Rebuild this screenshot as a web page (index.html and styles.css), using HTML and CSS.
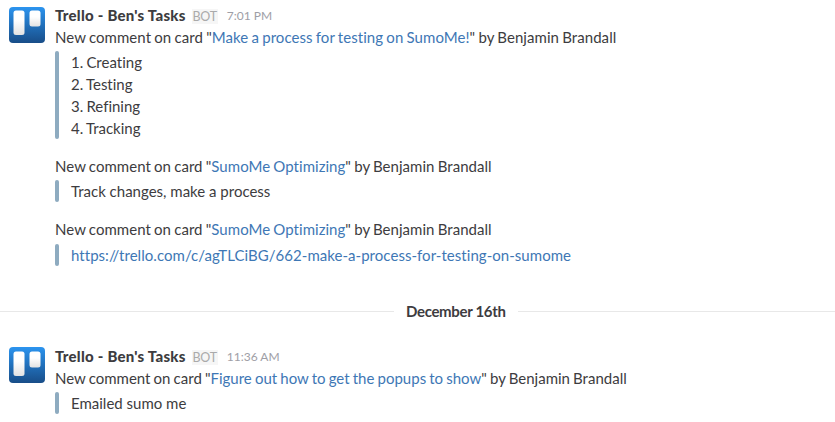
FILE: index.html
```
<!DOCTYPE html>
<html>
<head>
	<meta charset="utf-8">
	<meta name="viewport" content="width=device-width, initial-scale=1">
	<title>Trello - Ben's Tasks</title>
	<link rel="stylesheet" href="styles.css">
</head>
<body>

	<main>
		<div class="message">
			<svg class="avatar" width="36" height="36" viewBox="0 0 36 36">
				<defs>
					<linearGradient id="azul" x1="0" y1="0" x2="0" y2="1">
						<stop offset="0" stop-color="#2b94ef"/>
						<stop offset="1" stop-color="#184d88"/>
					</linearGradient>
					<linearGradient id="blanco" x1="0" y1="0" x2="0" y2="1">
						<stop offset="0.4" stop-color="#fff"/>
						<stop offset="1" stop-color="#e2e2e2"/>
					</linearGradient>
				</defs>
				<rect width="36" height="36" rx="4" fill="url(#azul)"/>
				<rect x="4.5" y="3.5" width="11" height="24.5" rx="2.5" fill="url(#blanco)"/>
				<rect x="20.5" y="3.5" width="11" height="16" rx="2.5" fill="url(#blanco)"/>
			</svg>
			<div class="content">
				<div class="info"><span class="sender">Trello - Ben's Tasks</span><span class="bot">BOT</span><span class="time">7:01 PM</span></div>
				<div class="text first">New comment on card "<a>Make a process for testing on SumoMe!</a>" by Benjamin Brandall</div>
				<div class="quote list"><div>1. Creating<br>2. Testing<br>3. Refining<br>4. Tracking</div></div>
				<div class="text next">New comment on card "<a>SumoMe Optimizing</a>" by Benjamin Brandall</div>
				<div class="quote"><div>Track changes, make a process</div></div>
				<div class="text next">New comment on card "<a>SumoMe Optimizing</a>" by Benjamin Brandall</div>
				<div class="quote url"><a>https://trello.com/c/agTLCiBG/662-make-a-process-for-testing-on-sumome</a></div>
			</div>
		</div>

		<div class="divider"><span>December 16th</span></div>

		<div class="message">
			<svg class="avatar" width="36" height="36" viewBox="0 0 36 36">
				<rect width="36" height="36" rx="4" fill="url(#azul)"/>
				<rect x="4.5" y="4.5" width="11" height="24.5" rx="2.5" fill="url(#blanco)"/>
				<rect x="20.5" y="4.5" width="11" height="16" rx="2.5" fill="url(#blanco)"/>
			</svg>
			<div class="content">
				<div class="info"><span class="sender">Trello - Ben's Tasks</span><span class="bot">BOT</span><span class="time">11:36 AM</span></div>
				<div class="text last">New comment on card "<a>Figure out how to get the popups to show</a>" by Benjamin Brandall</div>
				<div class="quote"><div>Emailed sumo me</div></div>
			</div>
		</div>
	</main>

</body>
</html>
```

FILE: styles.css
```
body{
	margin: 0;
	background: #fff;
	color: #3d3c40;
	font-family: Lato, sans-serif;
	font-size: 15px;
	font-variant-ligatures: none;
	line-height: 22px;
	overflow: hidden;
}
a{
	color: #3e77b5;
}

/*--------Messages-----------*/
.message{
	display: flex;
	gap: 10px;
	padding: 4px 9px 0;
}
.avatar{
	flex-shrink: 0;
	margin-top: 3px;
}
.divider + .message .avatar{
	margin-top: 2px;
}
.content{
	white-space: nowrap;
}
.info{
	display: flex;
	align-items: center;
	height: 22px;
}
.sender{
	font-weight: 900;
	letter-spacing: 0.25px;
}
.text{
	letter-spacing: 0.04px;
	word-spacing: -0.7px;
}
.first{
	letter-spacing: 0.06px;
}
.last{
	letter-spacing: 0;
}
.bot{
	margin: 2px 9px 0 6px;
	padding: 0 1px;
	background: #f6f6f6;
	color: #aaa;
	font-size: 12.5px;
	letter-spacing: -0.3px;
	line-height: 15px;
}
.time{
	margin-top: 2px;
	color: #9e9ea6;
	font-size: 12px;
}
.next{
	margin-top: 16px;
}

/*--------Quote bar-----------*/
.quote{
	display: flex;
	gap: 12px;
	margin-top: 3px;
}
.quote::before{
	content: "";
	width: 4px;
	background: #8eabc0;
	border-radius: 2px;
}
.list{
	word-spacing: -0.7px;
}
.url{
	margin-top: 4px;
	letter-spacing: 0.04px;
}

/*--------Day divider-----------*/
.divider{
	display: flex;
	align-items: center;
	gap: 12px;
	margin: 34px 0 19px;
	font-weight: bold;
	letter-spacing: -0.33px;
}
.divider::before,
.divider::after{
	content: "";
	height: 1px;
	background: #e8e8e8;
}
.divider::before{
	width: 394px;
}
.divider::after{
	flex: 1;
}
```
